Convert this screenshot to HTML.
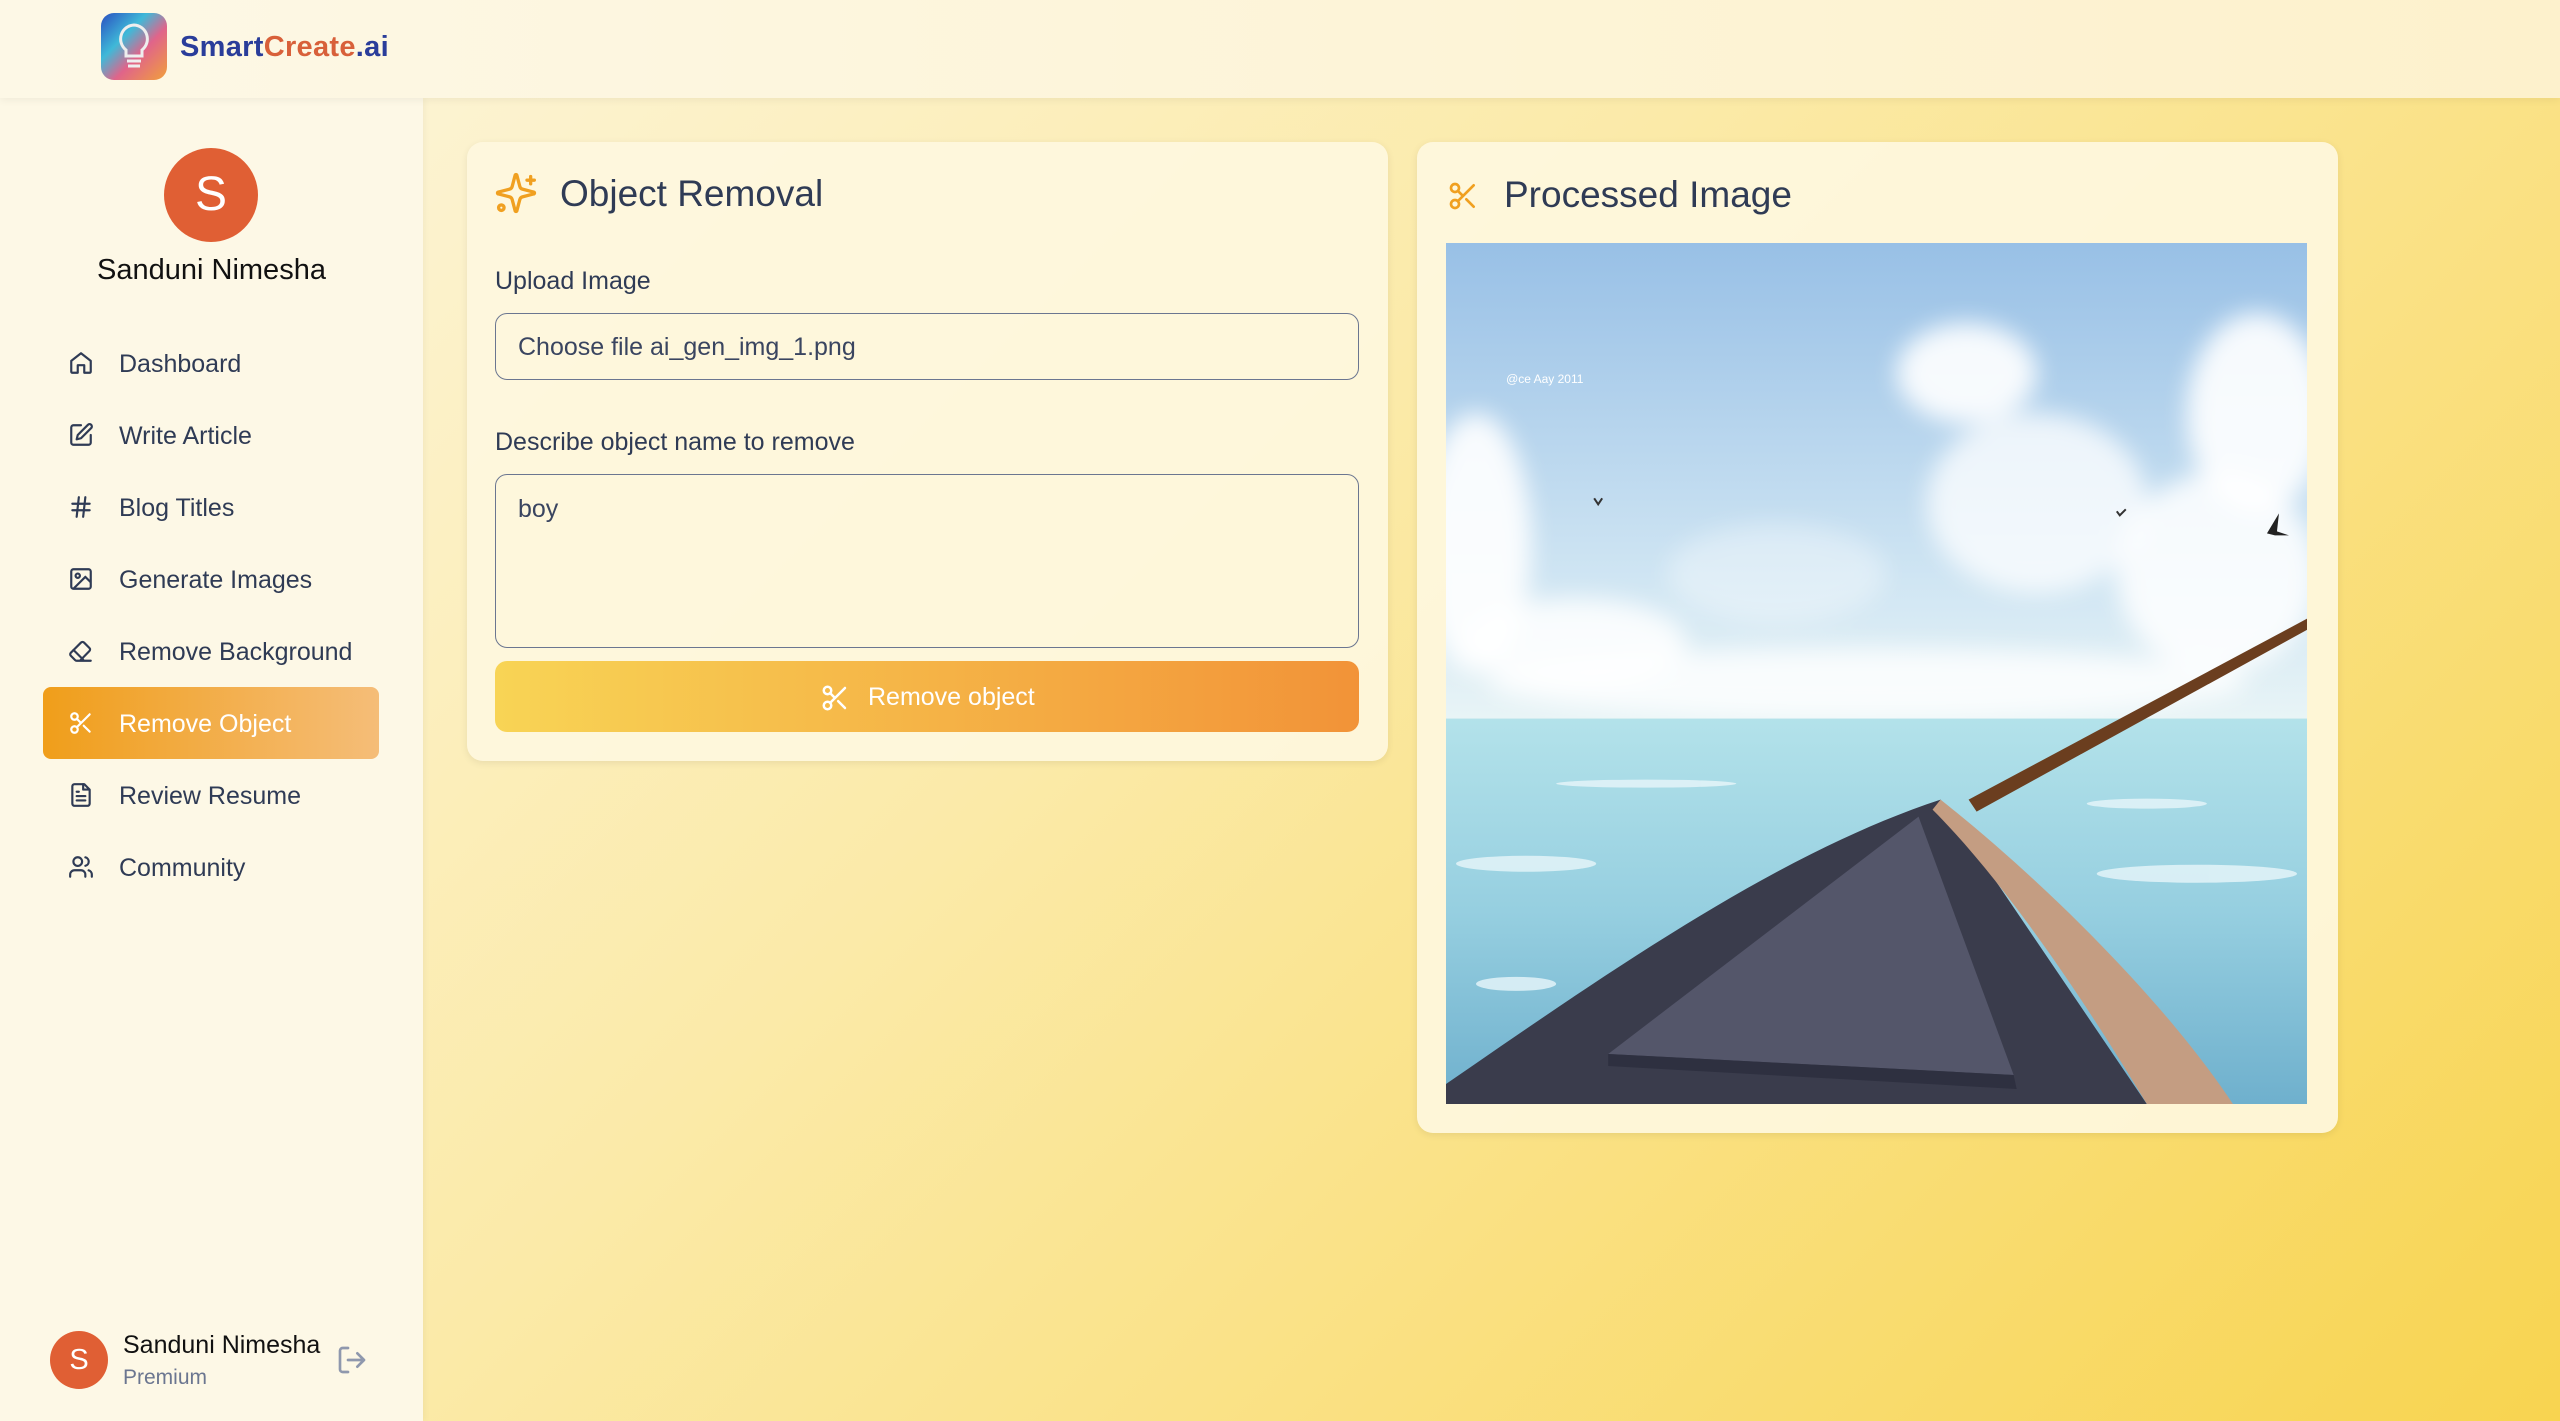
<!DOCTYPE html>
<html><head><meta charset="utf-8">
<style>
*{box-sizing:border-box;margin:0;padding:0}
body{width:2560px;height:1421px;overflow:hidden;font-family:"Liberation Sans","DejaVu Sans",sans-serif;background:linear-gradient(135deg,#fdf7e2 0%,#fbeaa8 45%,#f8d450 100%);position:relative;color:#2f3b55}
.header{position:absolute;left:0;top:0;width:2560px;height:98px;background:linear-gradient(90deg,#fdf8e6,#fdf1cc);box-shadow:0 2px 8px rgba(0,0,0,.06);z-index:2}
.side{position:absolute;left:0;top:98px;width:423px;height:1323px;background:#fdf8e6;box-shadow:2px 0 6px rgba(0,0,0,.04)}
.abs{position:absolute}
.nav{position:absolute;left:0;width:423px;height:72px;font-size:25px;color:#2f3b55}
.nav svg{position:absolute;left:68px;top:24px}
.nav span{position:absolute;left:119px;top:24px}
.card{position:absolute;background:rgba(254,247,222,.92);border-radius:16px;box-shadow:0 2px 8px rgba(0,0,0,.08)}
.lbl{position:absolute;font-size:25px;color:#2f3b55}
.inp{position:absolute;border:1.5px solid #6b7690;border-radius:12px;font-size:25px;color:#3a4560;padding-left:22px}
</style></head><body>
<div class="header">
  <svg class="abs" style="left:101px;top:13px" width="66" height="67" viewBox="0 0 66 67">
    <defs><linearGradient id="lg" x1="0" y1="0" x2="1" y2="1"><stop offset="0" stop-color="#2a4fc0"/><stop offset=".35" stop-color="#3fb9d8"/><stop offset=".6" stop-color="#e0648a"/><stop offset="1" stop-color="#f1a03a"/></linearGradient></defs>
    <rect width="66" height="67" rx="13" fill="url(#lg)"/>
    <path d="M33 12a14 14 0 0 0-8 25v6h16v-6a14 14 0 0 0-8-25z M26 48h14 M27 53h12" fill="none" stroke="#eee" stroke-width="3"/>
  </svg>
  <div class="abs" style="left:180px;top:31px;font-size:29px;font-weight:bold;color:#2a3d9a;letter-spacing:.3px">Smart<span style="color:#d8603a">Create</span><span style="color:#2a3d9a">.ai</span></div>
</div>
<div class="side">
  <div class="abs" style="left:164px;top:50px;width:94px;height:94px;border-radius:50%;background:#e05f34;color:#fff;font-size:48px;text-align:center;line-height:94px">S</div>
  <div class="abs" style="left:0;width:423px;top:156px;text-align:center;font-size:29px;color:#111">Sanduni Nimesha</div>
</div>
<div class="nav" style="top:326px"><svg width="26" height="26" viewBox="0 0 24 24" fill="none" stroke="#2f3b55" stroke-width="2" stroke-linecap="round" stroke-linejoin="round"><path d="M3 10l9-7 9 7v10a1 1 0 0 1-1 1h-5v-7h-6v7H4a1 1 0 0 1-1-1z"/></svg><span>Dashboard</span></div>
<div class="nav" style="top:398px"><svg width="26" height="26" viewBox="0 0 24 24" fill="none" stroke="#2f3b55" stroke-width="2" stroke-linecap="round" stroke-linejoin="round"><path d="M12 3H5a2 2 0 0 0-2 2v14a2 2 0 0 0 2 2h14a2 2 0 0 0 2-2v-7"/><path d="M18.4 2.6a2 2 0 0 1 3 3L12 15l-4 1 1-4z"/></svg><span>Write Article</span></div>
<div class="nav" style="top:470px"><svg width="26" height="26" viewBox="0 0 24 24" fill="none" stroke="#2f3b55" stroke-width="2" stroke-linecap="round"><path d="M4 9h16M4 15h16M10 3L8 21M16 3l-2 18"/></svg><span>Blog Titles</span></div>
<div class="nav" style="top:542px"><svg width="26" height="26" viewBox="0 0 24 24" fill="none" stroke="#2f3b55" stroke-width="2" stroke-linejoin="round"><rect x="3" y="3" width="18" height="18" rx="2"/><circle cx="9" cy="9" r="2"/><path d="M21 15l-5-5L5 21"/></svg><span>Generate Images</span></div>
<div class="nav" style="top:614px"><svg width="26" height="26" viewBox="0 0 24 24" fill="none" stroke="#2f3b55" stroke-width="2" stroke-linejoin="round" stroke-linecap="round"><path d="M21 21H8a2 2 0 0 1-1.4-.6l-4-4a2 2 0 0 1 0-2.8L12 4.2a2 2 0 0 1 2.8 0l5 5a2 2 0 0 1 0 2.8L11 21M5 11l9 9"/></svg><span>Remove Background</span></div>
<div class="abs" style="left:43px;top:687px;width:336px;height:72px;border-radius:8px;background:linear-gradient(90deg,#f09e1a,#f5bd78)"></div>
<div class="nav" style="top:686px;color:#fff"><svg width="26" height="26" viewBox="0 0 24 24" fill="none" stroke="#fff" stroke-width="2" stroke-linecap="round"><circle cx="6" cy="6" r="3"/><circle cx="6" cy="18" r="3"/><path d="M20 4L8.1 15.9M14.5 14.5L20 20M8.1 8.1L12 12"/></svg><span>Remove Object</span></div>
<div class="nav" style="top:758px"><svg width="26" height="26" viewBox="0 0 24 24" fill="none" stroke="#2f3b55" stroke-width="2" stroke-linejoin="round" stroke-linecap="round"><path d="M15 2H6a2 2 0 0 0-2 2v16a2 2 0 0 0 2 2h12a2 2 0 0 0 2-2V7z"/><path d="M14 2v5h5M16 13H8M16 17H8M10 9H8"/></svg><span>Review Resume</span></div>
<div class="nav" style="top:830px"><svg width="26" height="26" viewBox="0 0 24 24" fill="none" stroke="#2f3b55" stroke-width="2" stroke-linecap="round"><path d="M16 21v-2a4 4 0 0 0-4-4H6a4 4 0 0 0-4 4v2"/><circle cx="9" cy="7" r="4"/><path d="M22 21v-2a4 4 0 0 0-3-3.9M16 3.1a4 4 0 0 1 0 7.8"/></svg><span>Community</span></div>
<div class="abs" style="left:50px;top:1331px;width:58px;height:58px;border-radius:50%;background:#e05f34;color:#fff;font-size:29px;text-align:center;line-height:58px">S</div>
<div class="abs" style="left:123px;top:1331px;font-size:25px;color:#111">Sanduni Nimesha</div>
<div class="abs" style="left:123px;top:1366px;font-size:21px;color:#6b7690">Premium</div>
<svg class="abs" style="left:336px;top:1344px" width="32" height="32" viewBox="0 0 24 24" fill="none" stroke="#8f98ad" stroke-width="2" stroke-linecap="round" stroke-linejoin="round"><path d="M9 21H5a2 2 0 0 1-2-2V5a2 2 0 0 1 2-2h4M16 17l5-5-5-5M21 12H9"/></svg>

<div class="card" style="left:467px;top:142px;width:921px;height:619px"></div>
<svg class="abs" style="left:494px;top:170px" width="44" height="46" viewBox="0 0 24 24" fill="none" stroke="#f0a020" stroke-width="1.8" stroke-linecap="round" stroke-linejoin="round"><path d="M9.9 15.5a2 2 0 0 0-1.4-1.4L2.4 12.5a.5.5 0 0 1 0-1l6.1-1.6a2 2 0 0 0 1.4-1.4l1.6-6.1a.5.5 0 0 1 1 0l1.6 6.1a2 2 0 0 0 1.4 1.4l6.1 1.6a.5.5 0 0 1 0 1l-6.1 1.6a2 2 0 0 0-1.4 1.4l-1.6 6.1a.5.5 0 0 1-1 0z"/><path d="M20 3v4M22 5h-4"/><circle cx="4" cy="20" r="1.5"/></svg>
<div class="abs" style="left:560px;top:173px;font-size:37px;color:#2f3b55">Object Removal</div>
<div class="lbl" style="left:495px;top:267px">Upload Image</div>
<div class="inp" style="left:495px;top:313px;width:864px;height:67px;line-height:66px">Choose file ai_gen_img_1.png</div>
<div class="lbl" style="left:495px;top:428px">Describe object name to remove</div>
<div class="inp" style="left:495px;top:474px;width:864px;height:174px;padding-top:20px">boy</div>
<div class="abs" style="left:495px;top:661px;width:864px;height:71px;border-radius:12px;background:linear-gradient(90deg,#f8d455,#f29338)"></div>
<svg class="abs" style="left:820px;top:683px" width="30" height="30" viewBox="0 0 24 24" fill="none" stroke="#fff" stroke-width="2" stroke-linecap="round"><circle cx="6" cy="6" r="3"/><circle cx="6" cy="18" r="3"/><path d="M20 4L8.1 15.9M14.5 14.5L20 20M8.1 8.1L12 12"/></svg>
<div class="abs" style="left:868px;top:683px;font-size:25px;color:#fff">Remove object</div>

<div class="card" style="left:1417px;top:142px;width:921px;height:991px"></div>
<svg class="abs" style="left:1447px;top:180px" width="32" height="32" viewBox="0 0 24 24" fill="none" stroke="#f0a020" stroke-width="2" stroke-linecap="round"><circle cx="6" cy="6" r="3"/><circle cx="6" cy="18" r="3"/><path d="M20 4L8.1 15.9M14.5 14.5L20 20M8.1 8.1L12 12"/></svg>
<div class="abs" style="left:1504px;top:174px;font-size:37px;color:#2f3b55">Processed Image</div>
<svg class="abs" style="left:1446px;top:243px" width="861" height="861" viewBox="0 0 860 860">
  <defs>
    <linearGradient id="sky" x1="0" y1="0" x2="0" y2="1"><stop offset="0" stop-color="#98c0e6"/><stop offset=".7" stop-color="#cfe5f3"/><stop offset="1" stop-color="#e8f4f6"/></linearGradient>
    <linearGradient id="sea" x1="0" y1="0" x2="0" y2="1"><stop offset="0" stop-color="#b3e2ea"/><stop offset=".5" stop-color="#96cfe0"/><stop offset="1" stop-color="#6fb0cd"/></linearGradient>
    <filter id="bl"><feGaussianBlur stdDeviation="12"/></filter>
  </defs>
  <rect width="860" height="475" fill="url(#sky)"/>
  <g fill="#fff" filter="url(#bl)">
    <ellipse cx="30" cy="300" rx="55" ry="130" opacity=".9"/>
    <ellipse cx="130" cy="400" rx="110" ry="45" opacity=".85"/>
    <ellipse cx="520" cy="130" rx="70" ry="50" opacity=".9"/>
    <ellipse cx="590" cy="260" rx="110" ry="90" opacity=".75"/>
    <ellipse cx="810" cy="170" rx="70" ry="100" opacity=".9"/>
    <ellipse cx="770" cy="330" rx="100" ry="100" opacity=".85"/>
    <ellipse cx="420" cy="440" rx="380" ry="35" opacity=".8"/>
    <ellipse cx="330" cy="330" rx="110" ry="50" opacity=".35"/>
  </g>
  <rect y="475" width="860" height="385" fill="url(#sea)"/>
  <g fill="#e8f6fa" opacity=".8">
    <ellipse cx="80" cy="620" rx="70" ry="8"/><ellipse cx="750" cy="630" rx="100" ry="9"/>
    <ellipse cx="70" cy="740" rx="40" ry="7"/><ellipse cx="700" cy="560" rx="60" ry="5"/>
    <ellipse cx="200" cy="540" rx="90" ry="4"/>
  </g>
  <path d="M522 556 L868 371 L868 382 L530 568 Z" fill="#6b3e1f"/>
  <path d="M0 860 L0 840 C160 730 330 610 494 556 L700 860 Z" fill="#3a3c4c"/>
  <path d="M494 556 C600 640 720 760 786 860 L700 860 C640 760 560 640 486 566 Z" fill="#c49d82"/>
  <path d="M472 573 L162 810 L567 831 Z" fill="#54566a"/>
  <path d="M567 831 L162 810 L162 822 L570 845 Z" fill="#2e3040"/>
  <text x="60" y="140" font-size="12" fill="#fff" font-family="Liberation Sans, sans-serif">@ce Aay 2011</text>
  <path d="M148 255l4 6 4-6M670 268l3 4 6-6" stroke="#333" stroke-width="2" fill="none"/>
  <path d="M820 290l12-20-2 18 12 4-14 0z" fill="#222"/>
</svg>
</body></html>
